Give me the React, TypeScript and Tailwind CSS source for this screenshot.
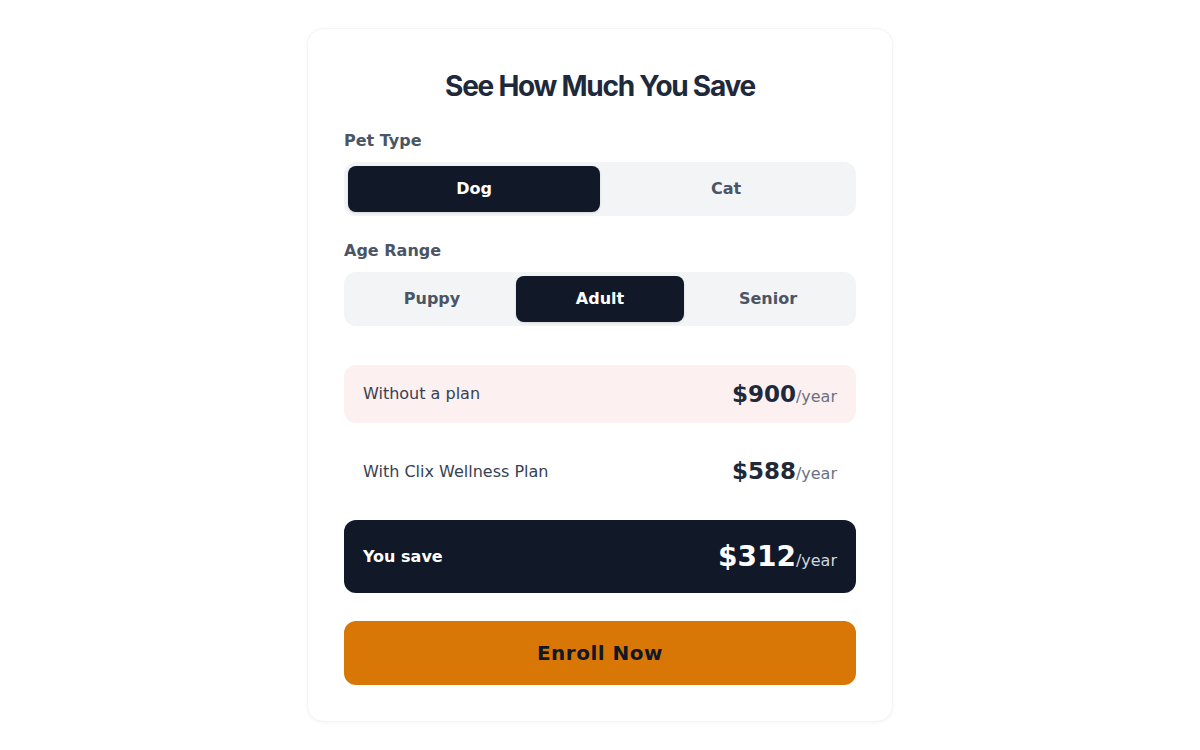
import { useState } from 'react';

const ages = ['Puppy', 'Adult', 'Senior'] as const;

export default function App() {
  const [pet, setPet] = useState<'Dog' | 'Cat'>('Dog');
  const [age, setAge] = useState<(typeof ages)[number]>('Adult');

  return (
    <div className="min-h-screen w-full bg-white flex justify-center pt-[28px] font-['DejaVu_Sans',sans-serif]">
      <div className="w-[586px] h-[694px] rounded-2xl border border-gray-100 bg-white shadow-[0_1px_4px_rgba(0,0,0,0.04)] px-9 pt-9 pb-9 flex flex-col">
        <h1 className="text-center text-[28px] leading-[42px] font-bold tracking-[-0.045em] text-[#1e293b] font-['Inter',sans-serif]">
          See How Much You Save
        </h1>

        {/* Pet type */}
        <div className="mt-[22px] text-base leading-6 font-bold text-gray-600">Pet Type</div>
        <div className="mt-[9px] grid grid-cols-2 rounded-xl bg-gray-100 p-1 h-[54px]">
          {(['Dog', 'Cat'] as const).map((p) => (
            <button
              key={p}
              onClick={() => setPet(p)}
              className={
                pet === p
                  ? 'rounded-lg bg-[#111827] text-white font-bold text-base shadow-sm'
                  : 'rounded-lg text-gray-600 font-bold text-base'
              }
            >
              {p}
            </button>
          ))}
        </div>

        {/* Age range */}
        <div className="mt-[23px] text-base leading-6 font-bold text-gray-600">Age Range</div>
        <div className="mt-[9px] grid grid-cols-3 rounded-xl bg-gray-100 p-1 h-[54px]">
          {ages.map((a) => (
            <button
              key={a}
              onClick={() => setAge(a)}
              className={
                age === a
                  ? 'rounded-lg bg-[#111827] text-white font-bold text-base shadow-sm'
                  : 'rounded-lg text-gray-600 font-bold text-base'
              }
            >
              {a}
            </button>
          ))}
        </div>

        {/* Results */}
        <div className="mt-[39px] flex flex-col gap-5">
          <div className="h-[58px] rounded-xl bg-[#fdf0f0] px-[19px] flex items-center justify-between">
            <span className="text-base text-gray-700">Without a plan</span>
            <span className="flex items-baseline">
              <span className="text-[23px] font-bold text-gray-800">$900</span>
              <span className="text-base text-gray-500">/year</span>
            </span>
          </div>
          <div className="h-[57px] px-[19px] flex items-center justify-between">
            <span className="text-base text-gray-700">With Clix Wellness Plan</span>
            <span className="flex items-baseline">
              <span className="text-[23px] font-bold text-gray-800">$588</span>
              <span className="text-base text-gray-500">/year</span>
            </span>
          </div>
          <div className="h-[73px] rounded-xl bg-[#111827] px-[19px] flex items-center justify-between">
            <span className="text-base font-bold text-white">You save</span>
            <span className="flex items-baseline">
              <span className="text-[28px] font-bold text-white">$312</span>
              <span className="text-base text-gray-300">/year</span>
            </span>
          </div>
        </div>

        <button className="mt-7 h-16 rounded-xl bg-[#d97706] text-xl font-bold tracking-wide text-gray-900">
          Enroll Now
        </button>
      </div>
    </div>
  );
}
